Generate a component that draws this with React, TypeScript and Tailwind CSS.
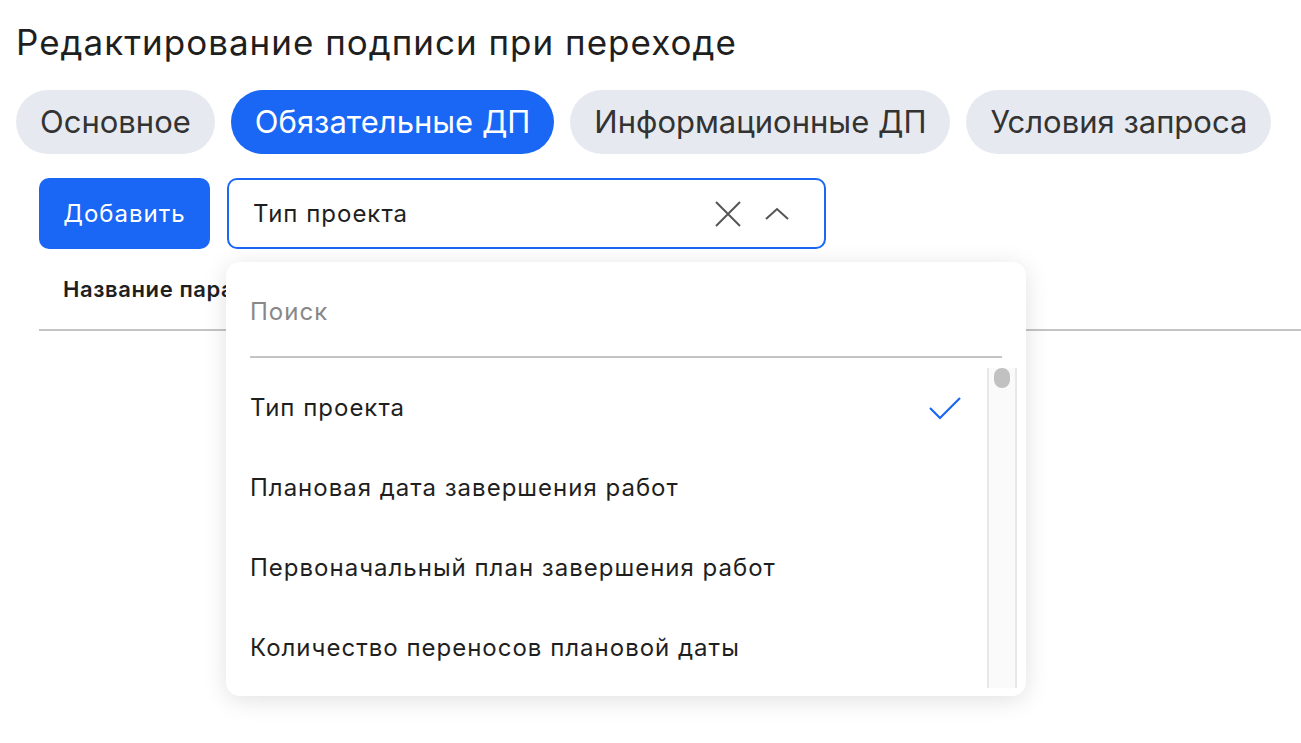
import React, { useState } from 'react';

const TABS = ['Основное', 'Обязательные ДП', 'Информационные ДП', 'Условия запроса'];
const OPTIONS = [
  'Тип проекта',
  'Плановая дата завершения работ',
  'Первоначальный план завершения работ',
  'Количество переносов плановой даты',
];

export default function App() {
  const [activeTab, setActiveTab] = useState(1);
  const [selected] = useState('Тип проекта');

  return (
    <div className="min-h-[743px] bg-white text-[#1f1f1f] font-['Inter',sans-serif] overflow-hidden">
      <div className="pt-[20px] pl-[16px]">
        <h1 className="text-[35px] leading-[44px] font-normal tracking-[1px]">Редактирование подписи при переходе</h1>

        {/* Tabs */}
        <div className="mt-[26px] flex gap-[16px]">
          {TABS.map((t, i) => (
            <button
              key={t}
              onClick={() => setActiveTab(i)}
              className={`h-[64px] px-[24px] rounded-[32px] text-[31px] ${
                i === activeTab ? 'bg-[#1a66f5] text-white' : 'bg-[#e6eaf0] text-[#333]'
              }`}
            >
              {t}
            </button>
          ))}
        </div>
      </div>

      <div className="pl-[39px] mt-[24px] relative">
        <div className="flex gap-[17px]">
          <button className="h-[71px] w-[171px] rounded-[10px] bg-[#1a66f5] text-white text-[24px] tracking-[1px]">Добавить</button>
          <div className="h-[71px] w-[599px] rounded-[10px] border-2 border-[#1a66f5] flex items-center pl-[24px] pr-[34px]">
            <span className="text-[24px] tracking-[1px] flex-1">Тип проекта</span>
            <svg width="28" height="28" viewBox="0 0 28 28" className="text-[#555] mr-[22px]">
              <path d="M2 2 L26 26 M26 2 L2 26" stroke="currentColor" strokeWidth="2" fill="none" />
            </svg>
            <svg width="26" height="14" viewBox="0 0 26 14" className="text-[#555]">
              <path d="M2 12 L13 2 L24 12" stroke="currentColor" strokeWidth="2" fill="none" />
            </svg>
          </div>
        </div>

        {/* Table header */}
        <div className="border-b-2 border-[#c4c4c4] h-[82px] flex items-center pl-[24px]">
          <span className="text-[22px] tracking-[0.6px] font-semibold">Название параметра</span>
        </div>

        {/* Dropdown */}
        <div className="absolute left-[226px] top-[84px] w-[800px] h-[434px] bg-white rounded-[14px] shadow-[0_4px_24px_rgba(0,0,0,0.12)] flex flex-col pl-[24px] pr-[9px]">
          <div className="pr-[15px] pt-[32px]">
            <div className="border-b-2 border-[#c4c4c4] h-[64px] text-[24px] tracking-[1px] text-[#888]">Поиск</div>
          </div>
          <div className="flex flex-1 pt-[10px] pb-[8px]">
            <div className="flex-1 flex flex-col">
              {OPTIONS.map((o) => (
                <div key={o} className="h-[80px] flex items-center pr-[25px] text-[24px] tracking-[1px]">
                  <span className="flex-1">{o}</span>
                  {o === selected && (
                    <svg width="34" height="24" viewBox="0 0 34 24" className="text-[#1a66f5]">
                      <path d="M2 12 L12 22 L32 2" stroke="currentColor" strokeWidth="2.2" fill="none" />
                    </svg>
                  )}
                </div>
              ))}
            </div>
            <div className="w-[30px] border-x-2 border-[#e8e8e8] bg-[#fafafa] flex justify-center">
              <div className="w-[16px] h-[20px] rounded-full bg-[#c1c1c1]" />
            </div>
          </div>
        </div>
      </div>
    </div>
  );
}
